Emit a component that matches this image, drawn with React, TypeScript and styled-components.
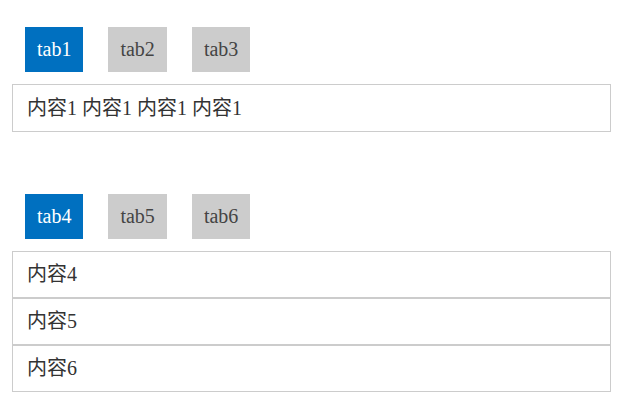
import React, { useState } from 'react'
import styled, { createGlobalStyle } from 'styled-components'

const GlobalStyle = createGlobalStyle`
    body {
        margin: 0;
        background: #fff;
        font-family: "Liberation Serif", "Noto Sans CJK SC", serif;
        font-size: 20px;
        color: #333;
    }
`

type TabGroupProps = {
    tabs: string[]
    contents: string[]
    stacked?: boolean
}

function TabGroup({ tabs, contents, stacked }: TabGroupProps) {
    const [active, setActive] = useState(0)

    return (
        <Group>
            <TabList>
                {tabs.map((tab, i) => (
                    <Tab key={tab} $active={i === active} onClick={() => setActive(i)}>{tab}</Tab>
                ))}
            </TabList>
            {stacked ? (
                <Rows>
                    {contents.map((c) => (
                        <Panel key={c}>{c}</Panel>
                    ))}
                </Rows>
            ) : (
                <Panel $tall>{contents[active]}</Panel>
            )}
        </Group>
    )
}

export default function App() {
    return (
        <Page>
            <GlobalStyle />
            <TabGroup
                tabs={['tab1', 'tab2', 'tab3']}
                contents={['内容1 内容1 内容1 内容1', '内容2 内容2 内容2 内容2', '内容3 内容3 内容3 内容3']}
            />
            <TabGroup
                tabs={['tab4', 'tab5', 'tab6']}
                contents={['内容4', '内容5', '内容6']}
                stacked
            />
        </Page>
    )
}

const Page = styled.div`
    display: flex;
    flex-direction: column;
    gap: 62px;
    padding: 27px 16px 0 12px;
`

const Group = styled.div`
    display: flex;
    flex-direction: column;
    gap: 12px;
`

const TabList = styled.div`
    display: flex;
    gap: 25px;
    padding-left: 13px;
`

const Tab = styled.div<{ $active: boolean }>`
    height: 45px;
    line-height: 45px;
    padding: 0 12px;
    background: ${(p) => (p.$active ? '#0070c0' : '#cccccc')};
    color: ${(p) => (p.$active ? '#ffffff' : '#444444')};
    cursor: pointer;
`

const Rows = styled.div`
    display: flex;
    flex-direction: column;
`

const Panel = styled.div<{ $tall?: boolean }>`
    height: ${(p) => (p.$tall ? '46px' : '45px')};
    line-height: ${(p) => (p.$tall ? '46px' : '45px')};
    padding: 0 14px;
    border: 1px solid #cccccc;
    color: #333;
`
